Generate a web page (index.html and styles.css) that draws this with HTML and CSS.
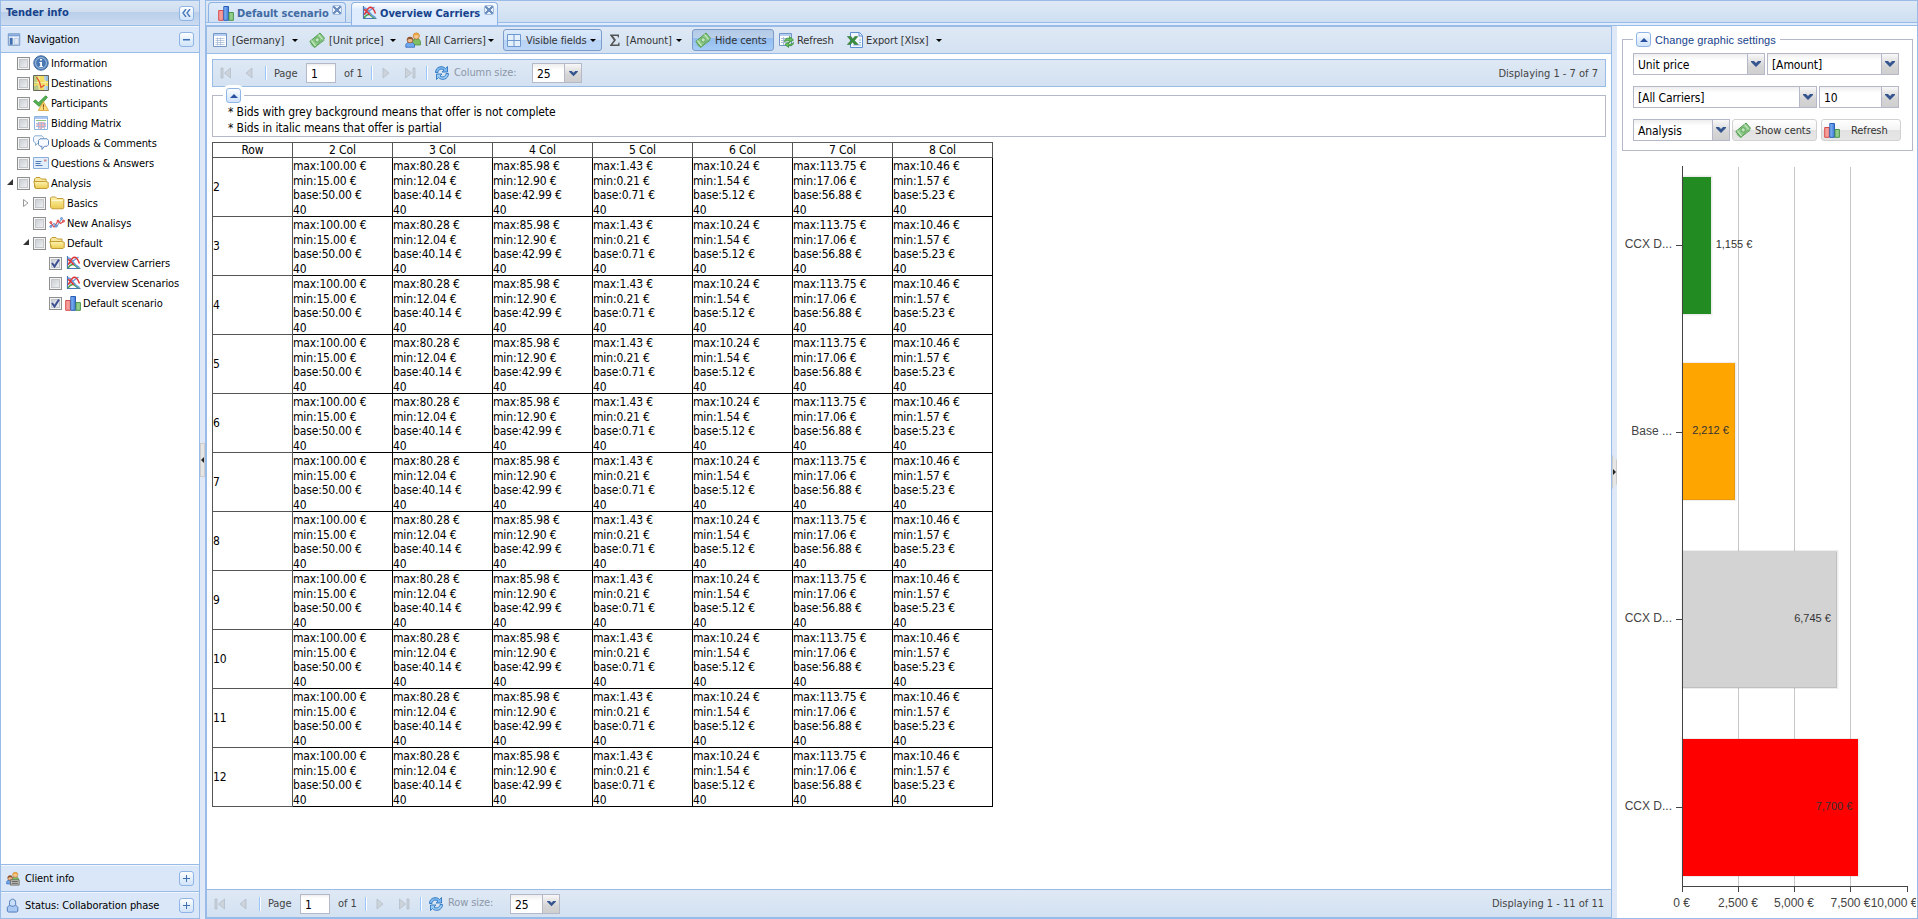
FILE: index.html
```html
<!DOCTYPE html>
<html lang="en">
<head>
<meta charset="utf-8">
<title>Overview Carriers</title>
<link rel="stylesheet" href="styles.css">
</head>
<body>
<svg class="defs" width="0" height="0">
  <defs>
    <linearGradient id="gf" x1="0" y1="0" x2="0" y2="1"><stop offset="0" stop-color="#fdf3b0"/><stop offset="1" stop-color="#eccb50"/></linearGradient>
    <linearGradient id="gbar" x1="0" y1="0" x2="1" y2="0"><stop offset="0" stop-color="#8fc0fa"/><stop offset="1" stop-color="#3a76d6"/></linearGradient>
  </defs>
  <symbol id="i-info" viewBox="0 0 16 16"><circle cx="8" cy="8" r="7.2" fill="#5b87bd" stroke="#3c689f"/><circle cx="8" cy="8" r="5.4" fill="#4a78b2" stroke="#a9c4e2" stroke-width=".9"/><path d="M7 4h2v1.6H7zM6.4 7H9v4h.8v1H6.4v-1h.8V8h-.8z" fill="#fff"/></symbol>
  <symbol id="i-map" viewBox="0 0 16 16"><path d="M.5.5h15v15H.5z" fill="#f2dc62" stroke="#66665a"/><path d="M1 1h3v8H1z" fill="#b9cf7c"/><path d="M11 1h4v5h-2l-2-2z" fill="#8fbce0"/><path d="M1 11l4-1 2 5H1z" fill="#b7c98a"/><path d="M11 11h4v4h-4z" fill="#a8cbe4"/><path d="M12 1v14M1 7.500h14M6 1v14" stroke="#fbf3bd" stroke-width=".7"/><path d="M3.500 2l3 5 1.500 5.500 3.500-2.500" fill="none" stroke="#e2563a" stroke-width="1.300"/></symbol>
  <symbol id="i-part" viewBox="0 0 16 16"><path d="M.5 6.500L2.500 4.800l3 3L12.500.800l2 1.400L6.200 11.500z" fill="#56b04f" stroke="#2f8632" stroke-width=".7"/><path d="M10.300 6.500l5.200 9H5.300z" fill="#fddc7c" stroke="#d69a2c" stroke-width=".8"/><path d="M9.900 9.300h1.100v3.200H9.900zM9.900 13.300h1.100v1.100H9.900z" fill="#8a5510"/></symbol>
  <symbol id="i-matrix" viewBox="0 0 16 16"><path d="M1.500 1.500h13v13h-13z" fill="#fff" stroke="#8db2e0"/><path d="M2 2h12v2H2z" fill="#a9c7ef"/><path d="M3 5.500h10" stroke="#8fc47e"/><path d="M5 7h6v1.500h2v3h-2V13H8.500v1h-2v-1H5v-1.500H3.500v-3H5z" fill="#f7b3b3"/><path d="M3 8.500h10M3 11.500h10M5.500 7v7M8.500 7v7M11.500 7v7" stroke="#9db8e0" stroke-width=".8"/></symbol>
  <symbol id="i-chat" viewBox="0 0 16 16"><path d="M2 .8h7l1.500 1.500v4L9 7.800H5L2.500 10.500V7.800L.5 6.500V2.200z" fill="#f4f8fd" stroke="#8daed4"/><path d="M7 3.800h7L15.500 5.300v4.500L14 11.300h-2.500L9 14.500v-3.200H7L5.500 9.800V5.300z" fill="#f7faff" stroke="#6089bd"/></symbol>
  <symbol id="i-card" viewBox="0 0 16 16"><path d="M.5 2.500h15v11H.5z" fill="#e3eefb" stroke="#8aaedd"/><path d="M2.500 6.500h6M2.500 8.500h5M2.500 10.500h7" stroke="#4f7cb8"/><path d="M11 4.500h2.500v2H11z" fill="#d08a86"/></symbol>
  <symbol id="i-open" viewBox="0 0 16 16"><path d="M1.500 12.500V4L3 2.500h4L8.500 4H13v3" fill="#f8e79a" stroke="#c29c35"/><path d="M.8 6.500h12l2.400.8v5L14 13.500H2.500z" fill="url(#gf)" stroke="#c29c35"/></symbol>
  <symbol id="i-fold" viewBox="0 0 16 16"><path d="M1.500 12V3L2.500 2h4L8 3.500h6l.8 1V13l-.8.800H3z" fill="url(#gf)" stroke="#c29c35"/><path d="M2.500 5.500h11" stroke="#fff8d0"/></symbol>
  <symbol id="i-line" viewBox="0 0 16 16"><path d="M1.500 11.500L5 8.500l3 2.500 5-7.500" fill="none" stroke="#6c9ad6" stroke-width="1.100"/><path d="M1.500 7.500L5 12l4-6 2.500 2.500L15 6" fill="none" stroke="#e04848" stroke-width="1.100"/><g fill="#f08a8a" stroke="#d33" stroke-width=".8"><circle cx="1.800" cy="7.500" r="1"/><circle cx="9" cy="6" r="1"/><circle cx="14.500" cy="6" r="1"/></g><g fill="#9cc0ee" stroke="#4a7fc4" stroke-width=".8"><circle cx="1.800" cy="11.500" r="1"/><circle cx="7" cy="11" r="1.200"/><circle cx="12.500" cy="3.500" r="1"/></g></symbol>
  <symbol id="i-over" viewBox="0 0 16 16"><path d="M2.500 1v12.500H15.500" fill="none" stroke="#4777b8" stroke-width="1.200"/><path d="M3 13c2-3 3.500-4 5.500-3.500S11 13 14.500 13" fill="none" stroke="#4b9f4b" stroke-width="1.500"/><path d="M3 3c3.500 0 4.500 3 6 5s3 4 5.500 4.500M4 9l9.500-7" fill="none" stroke="#6a9cdc" stroke-width="1.300"/><path d="M3 9.500C5 8.500 6 2.500 9.500 2.300c3 0 3.500 3.200 5 6.200M3 4.500c3 1 4 4 6 5" fill="none" stroke="#df3535" stroke-width="1.500"/></symbol>
  <symbol id="i-bars" viewBox="0 0 16 16"><path d="M.7 5.500h4.600v9.800H.7z" fill="#f59d99" stroke="#d94c4c"/><path d="M5.800 1.500h4.700v13.800H5.800z" fill="url(#gbar)" stroke="#2a5db5"/><path d="M11 7.500h4.400v7.800H11z" fill="#92cd8c" stroke="#4c964c"/></symbol>
  <symbol id="i-grid" viewBox="0 0 16 16"><path d="M1.500 1.500h13v13h-13z" fill="#fff" stroke="#7396c6"/><path d="M2 2h12v2H2z" fill="#b4cdf0"/><path d="M3.500 6.500h9M3.500 8.500h9M3.500 10.500h9M3.500 12.500h9M5.500 5.500v8M8.500 5.500v8" stroke="#a8bcd8" stroke-width=".8"/></symbol>
  <symbol id="i-money" viewBox="0 0 16 16"><path d="M.8 9.500L11 1l4.500 5.300L5.800 15.200z" fill="#8ecb88" stroke="#4f9a50"/><path d="M2.500 8.500l4 5.500M9.500 2.500l4.200 5" stroke="#d9f0d4"/><path d="M1.500 12l4 3.500L15.500 8" fill="none" stroke="#69ad68"/><circle cx="8.200" cy="7.900" r="2.200" fill="#c3e6bd" stroke="#5aa35a"/></symbol>
  <symbol id="i-users" viewBox="0 0 16 16"><path d="M7.500 13V9.500L9 7h5l1.500 2.500V13z" fill="#7fbe63" stroke="#4d8a38" stroke-width=".7"/><circle cx="11.300" cy="4" r="3.100" fill="#f8c48d" stroke="#ba7b3b" stroke-width=".8"/><path d="M8.200 4C8 0 14.500 0 14.400 4 12 2.500 10.500 2.500 8.200 4z" fill="#e9a53a"/><path d="M.8 15.300v-2.800L2.500 10.500h5l2 2v2.800z" fill="#6fa8ef" stroke="#2a5db5" stroke-width=".7"/><circle cx="5" cy="8" r="2.900" fill="#f3bb8c" stroke="#93562e" stroke-width=".8"/><path d="M2 8c-.2-4 6.200-4 6 0C6.500 6.500 4 6.500 2 8z" fill="#8c5430"/></symbol>
  <symbol id="i-window" viewBox="0 0 16 16"><path d="M1.500 2.500h13v12h-13z" fill="#e4f0fc" stroke="#6f98ce"/><path d="M8 3v11M2 8.500h12" stroke="#6f98ce"/></symbol>
  <symbol id="i-sigma" viewBox="0 0 16 16"><path d="M3 2.500h9v3h-1L10.500 4H6l3 4-3.500 4.500H11l.5-2h1v3.500H3v-.8L6.800 8.300 3 3.300z" fill="#555"/></symbol>
  <symbol id="i-tabref" viewBox="0 0 16 16"><path d="M1.500 1.500h12v12h-12z" fill="#fff" stroke="#7396c6"/><path d="M2 2h11v2H2z" fill="#b4cdf0"/><path d="M3 6.500h9M3 8.500h9M3 10.500h9M5.500 5v8" stroke="#a8bcd8"/><path d="M6.500 9.500c0-3 3-4 5-3V4.300L15.500 8l-4 2.500V9c-2-.5-3 0-5 .5zM15.500 10.500c0 3-3 3.800-5 3V15.500L6.800 12.300l3.700-2V12c2 .4 3.500 0 5-1.500z" fill="#6abf5c" stroke="#2d8434" stroke-width=".7"/></symbol>
  <symbol id="i-xls" viewBox="0 0 16 16"><path d="M3.500.5h9l3 3v12h-12z" fill="#f2f7fe" stroke="#5c8ed0"/><path d="M12 1v3h3" fill="none" stroke="#5c8ed0"/><path d="M12 8h2M12 10.500h2M6 13h8" stroke="#8db0e0"/><path d="M.3 4.500H4L5.800 7l2-2.500h3L7.500 8.500l3.700 4H7.500l-2-2.500-2 2.500H.3L4 8.500z" fill="#3c8f41" stroke="#236b2b" stroke-width=".5"/></symbol>
  <symbol id="i-nav" viewBox="0 0 16 16"><path d="M1.500 1.500h13v13h-13z" fill="#fff" stroke="#5a83ba"/><path d="M2 2h12v2.500H2z" fill="#7da4da"/><path d="M3 6h3.500v8H3z" fill="#3f6eb0"/><path d="M8 6.500h5.500v7H8z" fill="#dfe9f7" stroke="#a9bfdc"/></symbol>
  <symbol id="i-client" viewBox="0 0 16 16"><use href="#i-users" width="15" height="15"/><path d="M5 9.500h10v6H5z" fill="#c8c8c0" stroke="#66665e"/><path d="M6.500 11.500h7M6.500 13.500h7" stroke="#555"/></symbol>
  <symbol id="i-user" viewBox="0 0 16 16"><path d="M1.500 14.500V10L4 7.500h7L13.500 10v4.500L12 15.500H3z" fill="#a9c9f2" stroke="#4470b4"/><path d="M4 4.500C4 -.5 11 -.5 11 4.500V7c-1 2.500-6 2.500-7 0z" fill="#c8ddf8" stroke="#4470b4"/></symbol>
  <symbol id="i-reload" viewBox="0 0 16 16"><path d="M1.500 7.500c0-6 7-7.500 10-4L13.500 1.500V7H8l2-2C7.500 3 4 4.500 4 7.500z" fill="#7db8ee" stroke="#2f76c0" stroke-width=".9"/><path d="M14.500 8.500c0 6-7 7.500-10 4L2.500 14.500V9H8l-2 2c2.500 2 6 .5 6-2.500z" fill="#9accf5" stroke="#2f76c0" stroke-width=".9"/></symbol>
  <symbol id="i-first" viewBox="0 0 16 16"><path d="M3 3h2v10H3zM12.500 3v10L6.500 8z" fill="#ccd3db" stroke="#b0b9c4" stroke-width=".7"/></symbol>
  <symbol id="i-prev" viewBox="0 0 16 16"><path d="M11 3v10L5 8z" fill="#ccd3db" stroke="#b0b9c4" stroke-width=".7"/></symbol>
  <symbol id="i-down" viewBox="0 0 10 8"><path d="M0 1h3l2 2 2-2h3v1L5 7 0 2z" fill="#35558f"/></symbol>
  <symbol id="i-ddouble" viewBox="0 0 9 8"><path d="M4 0L1 4l3 4M8 0L5 4l3 4" fill="none" stroke="#4878b8" stroke-width="1.400"/></symbol>
</svg>

<div class="viewport">
  <aside class="side">
    <header class="side-title"><span class="bold">Tender info</span><span class="tool"><svg width="9" height="8"><use href="#i-ddouble"/></svg></span></header>
    <header class="acc acc-first"><svg class="ic"><use href="#i-nav"/></svg><span class="grow">Navigation</span><span class="tool minus"></span></header>
    <ul class="tree" id="tree"></ul>
    <header class="acc"><svg class="ic"><use href="#i-client"/></svg><span class="grow">Client info</span><span class="tool minus plus"></span></header>
    <header class="acc acc-last"><svg class="ic"><use href="#i-user"/></svg><span class="grow">Status: Collaboration phase</span><span class="tool minus plus"></span></header>
  </aside>
  <div class="split split-left"><i class="handle"></i></div>
  <main class="main">
    <nav class="tabs">
      <div class="tab tab-a"><svg class="ic"><use href="#i-bars"/></svg><span class="bold">Default scenario</span><i class="close"></i></div>
      <div class="tab tab-b"><svg class="ic"><use href="#i-over"/></svg><span class="bold">Overview Carriers</span><i class="close"></i></div>
    </nav>
    <div class="work">
      <section class="center">
        <div class="toolbar">
          <div class="btn w1"><svg class="ic"><use href="#i-grid"/></svg><span>[Germany]</span><i class="arr"></i></div>
          <div class="btn w2"><svg class="ic"><use href="#i-money"/></svg><span>[Unit price]</span><i class="arr"></i></div>
          <div class="btn w3"><svg class="ic"><use href="#i-users"/></svg><span>[All Carriers]</span><i class="arr"></i></div>
          <div class="btn over w4"><svg class="ic"><use href="#i-window"/></svg><span>Visible fields</span><i class="arr"></i></div>
          <div class="btn w5"><svg class="ic"><use href="#i-sigma"/></svg><span>[Amount]</span><i class="arr"></i></div>
          <div class="btn pressed w6"><svg class="ic"><use href="#i-money"/></svg><span>Hide cents</span></div>
          <div class="btn w7"><svg class="ic"><use href="#i-tabref"/></svg><span>Refresh</span></div>
          <div class="btn w8"><svg class="ic"><use href="#i-xls"/></svg><span>Export [Xlsx]</span><i class="arr"></i></div>
        </div>
        <div class="body">
          <div class="paging boxed">
            <svg class="ic"><use href="#i-first"/></svg><svg class="ic p-prev"><use href="#i-prev"/></svg><i class="sep s1"></i>
            <span class="p-page">Page</span><span class="field p-num">1</span><span class="p-of">of 1</span><i class="sep s2"></i>
            <svg class="ic flip"><use href="#i-prev"/></svg><svg class="ic flip p-last"><use href="#i-first"/></svg><i class="sep s3"></i>
            <svg class="ic p-rel"><use href="#i-reload"/></svg><span class="muted m-col">Column size:</span>
            <span class="combo p-combo"><b>25</b><i><svg width="9" height="7"><use href="#i-down"/></svg></i></span>
            <span class="disp">Displaying 1 - 7 of 7</span>
          </div>
          <div class="note"><span class="tool tri"></span><p>* Bids with grey background means that offer is not complete</p><p>* Bids in italic means that offer is partial</p></div>
          <table class="grid"><thead id="head"></thead><tbody id="rows"></tbody></table>
        </div>
        <div class="paging bottom">
          <svg class="ic"><use href="#i-first"/></svg><svg class="ic p-prev"><use href="#i-prev"/></svg><i class="sep s1"></i>
          <span class="p-page">Page</span><span class="field p-num">1</span><span class="p-of">of 1</span><i class="sep s2"></i>
          <svg class="ic flip"><use href="#i-prev"/></svg><svg class="ic flip p-last"><use href="#i-first"/></svg><i class="sep s3"></i>
          <svg class="ic p-rel"><use href="#i-reload"/></svg><span class="muted m-row">Row size:</span>
          <span class="combo p-combo"><b>25</b><i><svg width="9" height="7"><use href="#i-down"/></svg></i></span>
          <span class="disp">Displaying 1 - 11 of 11</span>
        </div>
      </section>
      <div class="split split-right"><i class="handle handle-r"></i></div>
      <section class="east">
        <div class="settings">
          <div class="legend"><span class="tool tri"></span><span>Change graphic settings</span></div>
          <div class="srow"><span class="combo c132"><b>Unit price</b><i><svg width="10" height="8"><use href="#i-down"/></svg></i></span><span class="combo c132"><b>[Amount]</b><i><svg width="10" height="8"><use href="#i-down"/></svg></i></span></div>
          <div class="srow"><span class="combo c184"><b>[All Carriers]</b><i><svg width="10" height="8"><use href="#i-down"/></svg></i></span><span class="combo c80"><b>10</b><i><svg width="10" height="8"><use href="#i-down"/></svg></i></span></div>
          <div class="srow"><span class="combo c97"><b>Analysis</b><i><svg width="10" height="8"><use href="#i-down"/></svg></i></span><span class="gbtn g85"><svg class="ic"><use href="#i-money"/></svg><span>Show cents</span></span><span class="gbtn g80"><svg class="ic"><use href="#i-bars"/></svg><span>Refresh</span></span></div>
        </div>
        <svg class="chart" width="299" height="767" viewBox="1617 151 299 767">
          <path d="M1738.500 167V886M1794.500 167V886M1850.500 167V886" stroke="#c8c8c8"/>
          <g fill="none" stroke="#000" stroke-opacity=".07" stroke-width="3"><path d="M1683 177h28v137h-28zM1683 363.500h52v136h-52zM1683 551.500h154v136h-154zM1683 739.500h175v136h-175z"/></g>
          <path d="M1683 177h28v137h-28z" fill="#228b22"/>
          <path d="M1683 363h52v137h-52z" fill="#ffa500"/><path d="M1683 499.500h51.500V364" fill="none" stroke="#ea9a0c"/>
          <path d="M1683 551h154v137h-154z" fill="#d3d3d3"/><path d="M1683 687.500h153.500V552" fill="none" stroke="#c0c0c0"/>
          <path d="M1683 739h175v137h-175z" fill="#f00"/>
          <path d="M1682.500 166V892M1676 245.500h6M1676 432.500h6M1676 619.500h6M1676 807.500h6M1682 886.500h226M1738.500 887v5M1794.500 887v5M1850.500 887v5M1907.500 887v5" fill="none" stroke="#444"/>
          <g class="cat"><text x="1672" y="248">CCX D...</text><text x="1672" y="435">Base ...</text><text x="1672" y="622">CCX D...</text><text x="1672" y="810">CCX D...</text></g>
          <g class="val"><text x="1734" y="248">1,155 €</text><text x="1710.500" y="434">2,212 €</text><text x="1812.500" y="622">6,745 €</text><text x="1834" y="810">7,700 €</text></g>
          <g class="axis"><text x="1681.500" y="907">0 €</text><text x="1738" y="907">2,500 €</text><text x="1794" y="907">5,000 €</text><text x="1850.500" y="907">7,500 €</text><text x="1894" y="907">10,000 €</text></g>
        </svg>
      </section>
    </div>
  </main>
</div>
<script src="app.js"></script>
</body>
</html>
```

FILE: styles.css
```css
* { box-sizing: border-box; }
html, body { height: 919px; overflow: hidden; }
body { margin: 0; background: #fff; font: 11px/14px "DejaVu Sans Condensed", "DejaVu Sans", sans-serif; font-stretch: condensed; letter-spacing: -0.1px; color: #000; }
ul, p { margin: 0; padding: 0; list-style: none; }
.defs { position: absolute; }
.ic { width: 16px; height: 16px; flex: none; display: block; }
.grow { flex: 1; padding-top: 1px; }
.bold { font-weight: bold; letter-spacing: 0; }
.viewport { display: flex; width: 1918px; height: 919px; background: #dfe8f6; overflow: hidden; }

.side { width: 200px; height: 919px; display: flex; flex-direction: column; border: 1px solid #99bbe8; background: #fff; }
.side-title { height: 25px; display: flex; align-items: center; justify-content: space-between; padding: 0 5px; color: #15428b; border-bottom: 1px solid #99bbe8; background: linear-gradient(#dae6f4 0, #cfddef 11px, #b9cee9 11px, #cbdbf0 100%); }
.acc { height: 27px; flex: none; display: flex; align-items: center; gap: 3px; padding: 0 5px 0 4px; background: #d9e7f8; border-top: 1px solid #99bbe8; box-shadow: inset 0 1px #f1f6fd; }
.acc .ic { margin: 1px 2px 0 1px; width: 14px; height: 15px; }
.acc-first { border-top: 0; border-bottom: 1px solid #99bbe8; gap: 4px; }
.acc-first .ic { margin-left: 2px; }
.tool { width: 15px; height: 15px; flex: none; border: 1px solid #8fb4e6; border-radius: 3px; background: linear-gradient(#fff, #e3effc 50%, #d2e4fa); display: flex; align-items: center; justify-content: center; position: relative; }
.minus::before { content: ""; width: 7px; height: 1px; background: #3f6fb0; box-shadow: 0 1px #8db0de; }
.plus::before { box-shadow: none; }
.plus::after { content: ""; position: absolute; left: 6px; top: 3px; width: 1px; height: 7px; background: #3f6fb0; }
.tri::before { content: ""; border: 4px solid transparent; border-top: 0; border-bottom-color: #2a52a0; }

.tree { flex: 1; }
.node { height: 20px; display: flex; align-items: center; padding-left: 6px; }
.node.d1 { padding-left: 22px; }
.node.d2 { padding-left: 38px; }
.node .ic { margin: 0 2px 0 3px; }
.label { padding-top: 1px; }
.exp { width: 10px; height: 8px; flex: none; }
.exp.open::before { content: ""; display: block; width: 0; height: 0; border-left: 6px solid transparent; border-bottom: 6px solid #333; }
.chk { width: 13px; height: 13px; flex: none; border: 1px solid #8e8f8f; background: linear-gradient(135deg, #c3c8ce, #f6f6f6); box-shadow: inset 0 0 0 1px #f4f4f4, inset 0 0 0 2px #c4c8cd; }
.chk svg, .exp svg { display: block; }

.split { width: 5px; position: relative; background: #dfe8f6; flex: none; }
.handle { position: absolute; left: 0; top: 443px; width: 5px; height: 34px; background: #e6e6e6; border: 1px solid #ccc; }
.handle::before { content: ""; position: absolute; left: 0; top: 13px; border: 3px solid transparent; border-left: 0; border-right-color: #222; }
.handle-r { top: 429px; clip-path: polygon(0 0, 100% 5px, 100% 29px, 0 100%); }
.handle-r::before { border-left: 3px solid #222; border-right: 0; }

.main { width: 1713px; height: 919px; border: 1px solid #99bbe8; display: flex; flex-direction: column; background: #dfe8f6; }
.tabs { height: 25px; flex: none; display: flex; align-items: flex-start; gap: 5px; padding: 1px 0 0 2px; background: linear-gradient(#dfe9f5 0, #cddff1 21px, #99bbe8 21px, #99bbe8 22px, #deecfd 22px, #deecfd 24px, #99bbe8 24px); }
.tab { height: 20px; display: flex; align-items: center; border: 1px solid #8db2e3; border-bottom: 0; border-radius: 4px 4px 0 0; padding: 1px 0 0 9px; color: #416aa3; background: linear-gradient(#deebfb, #cfe0f5); position: relative; }
.tab-a { width: 138px; }
.tab-b { width: 147px; height: 23px; padding-bottom: 3px; color: #15428b; background: linear-gradient(#fff, #deecfd 30%); }
.tab .ic { margin-right: 3px; }
.tab .bold { padding-top: 1px; }
.close { position: absolute; right: 3px; top: 2px; width: 10px; height: 10px; border: 1px solid #a5bddf; border-radius: 2px; background: linear-gradient(45deg, transparent 42%, #6d8fc0 42%, #6d8fc0 58%, transparent 58%), linear-gradient(-45deg, #e6effa 42%, #6d8fc0 42%, #6d8fc0 58%, #e6effa 58%); }
.work { flex: 1; display: flex; min-height: 0; }
.center { width: 1406px; flex: none; border: 1px solid #99bbe8; display: flex; flex-direction: column; background: #fff; }

.toolbar { height: 27px; flex: none; display: flex; align-items: center; padding-left: 3px; border-bottom: 1px solid #99bbe8; background: linear-gradient(#dfe9f5, #d3e1f1); color: #333; }
.btn { height: 22px; display: flex; align-items: center; border: 1px solid transparent; border-radius: 3px; padding-left: 2px; position: relative; white-space: nowrap; }
.btn span { margin-left: 4px; padding-top: 1px; }
.arr { position: absolute; right: 5px; top: 9px; border: 3px solid transparent; border-top-color: #000; border-bottom: 0; }
.over { border-color: #7c9ccb; background: linear-gradient(#dcebfc 0, #cfe1f9 50%, #b9d3f4 50%, #bcd6f7 100%); }
.pressed { border-color: #7c9ccb; background: linear-gradient(#b3cae6 0, #bbd0ea 42%, #94bdef 42%, #a5ccf7 100%); }
.w1 { width: 95px; margin-left: -1px; }
.w2 { width: 96px; margin-left: 2px; }
.w3 { width: 98px; }
.w4 { width: 99px; margin-left: 3px; }
.w5 { width: 84px; margin-left: 2px; }
.w6 { width: 82px; margin-left: 4px; }
.w7 { width: 65px; margin-left: 1px; }
.w8 { width: 104px; margin-left: 4px; }
.w7 span, .w8 span, .w5 span { margin-left: 3px; }

.body { flex: 1; padding: 5px; min-height: 0; }
.paging { height: 28px; display: flex; align-items: center; padding: 0 7px 0 5px; background: linear-gradient(#dfe9f5, #d3e1f1); color: #444; white-space: nowrap; }
.boxed { border: 1px solid #99bbe8; }
.bottom { border-top: 1px solid #99bbe8; flex: none; }
.p-prev { margin-left: 7px; }
.sep { width: 2px; height: 14px; flex: none; background: #98c8ff; border-right: 1px solid #fff; }
.s1 { margin-left: 8px; }
.p-page { width: 32px; margin-left: 7px; padding-top: 1px; }
.field { border: 1px solid #b5b8c8; background: linear-gradient(#eee 0, #fff 3px); height: 20px; font-size: 12px; line-height: 20px; padding-left: 4px; color: #000; }
.p-num { width: 30px; margin-right: 8px; }
.p-of { width: 27px; padding-top: 1px; }
.flip { transform: scaleX(-1); margin-left: 5px; }
.p-last { margin-left: 8px; }
.s3 { margin-left: 8px; }
.p-rel { margin: 0 4px 0 6px; }
.muted { color: #8c97a8; width: 78px; margin-top: -1px; }
.m-row { width: 62px; }
.disp { margin-left: auto; padding-top: 1px; letter-spacing: 0; }
.combo { display: flex; height: 22px; border: 1px solid #b5b8c8; background: linear-gradient(#eee 0, #fff 6px); color: #000; font-size: 12px; }
.combo b { flex: 1; font-weight: normal; padding-left: 4px; line-height: 22px; }
.combo i { width: 17px; border-left: 1px solid #b5b8c8; background: linear-gradient(#f8f8f8, #d5d5d5 60%, #cfcfcf); display: flex; align-items: center; justify-content: center; }
.p-combo { width: 50px; height: 20px; }
.p-combo b { line-height: 20px; }
.note { position: relative; height: 42px; margin-top: 8px; border: 1px solid #b5b8c8; padding: 8px 0 0 15px; font-size: 12px; line-height: 16px; }
.note .tool { position: absolute; left: 13px; top: -8px; box-shadow: 0 0 0 3px #fff; }

.grid { border-collapse: collapse; table-layout: fixed; width: 781px; margin-top: 5px; font-size: 12px; line-height: 14.5px; }
.grid th { height: 15px; padding: 0; font-weight: normal; border: 1px solid #555; line-height: 14px; }
.grid td { height: 59px; padding: 0; border: 1px solid #000; vertical-align: middle; }
.grid td.rn { border-color: #555; }
.grid th:first-child { width: 80px; }
.cell { padding-top: 1px; margin-bottom: -1px; letter-spacing: -0.15px; }

.east { flex: 1; background: #fff; display: flex; flex-direction: column; }
.settings { position: relative; margin: 13px 4px 0 5px; height: 112px; flex: none; border: 1px solid #b5b8c8; padding: 13px 0 0 10px; display: flex; flex-direction: column; gap: 11px; }
.legend { position: absolute; left: 10px; top: -8px; height: 15px; display: flex; align-items: center; gap: 4px; padding: 0 4px 0 3px; background: #fff; font: 11px/14px "Liberation Sans", sans-serif; letter-spacing: 0.1px; color: #15428b; }
.srow { display: flex; gap: 2px; }
.c132 { width: 132px; }
.c184 { width: 184px; }
.c80 { width: 80px; }
.c97 { width: 97px; }
.gbtn { height: 22px; display: flex; align-items: center; border: 1px solid #d1d1d1; border-radius: 3px; background: linear-gradient(#fff, #f4f4f4 48%, #e2e2e2 52%, #e6e6e6); color: #333; padding-left: 2px; }
.gbtn span { padding-top: 1px; }
.g85 { width: 85px; }
.g85 span { margin-left: 4px; }
.g80 { width: 80px; margin-left: 2px; }
.g80 span { margin-left: 11px; }
.chart { display: block; font-family: "Liberation Sans", sans-serif; letter-spacing: 0; }
.cat { font-size: 12px; fill: #444; text-anchor: end; }
.axis { font-size: 12px; fill: #444; text-anchor: middle; }
.val { font-size: 11px; fill: #333; text-anchor: middle; }
```

FILE: app.js
```js
const nodes = [
  [0, '', 0, 'info', 'Information'], [0, '', 0, 'map', 'Destinations'], [0, '', 0, 'part', 'Participants'],
  [0, '', 0, 'matrix', 'Bidding Matrix'], [0, '', 0, 'chat', 'Uploads & Comments'], [0, '', 0, 'card', 'Questions & Answers'],
  [0, 'open', 0, 'open', 'Analysis'], [1, 'shut', 0, 'fold', 'Basics'], [1, '', 0, 'line', 'New Analisys'],
  [1, 'open', 0, 'open', 'Default'], [2, '', 1, 'over', 'Overview Carriers'], [2, '', 0, 'over', 'Overview Scenarios'],
  [2, '', 1, 'bars', 'Default scenario']
];
const shut = '<svg width="6" height="8"><path d="M.5.5v7L5 4z" fill="#fff" stroke="#999"/></svg>';
const tick = '<svg width="11" height="11"><path d="M2 5l2.500 3.500L9 1.500" fill="none" stroke="#3a4f94" stroke-width="2"/></svg>';
document.getElementById('tree').innerHTML = nodes.map(([d, e, c, icon, text]) =>
  `<li class="node d${d}"><span class="exp ${e}">${e === 'shut' ? shut : ''}</span><span class="chk">${c ? tick : ''}</span>` +
  `<svg class="ic"><use href="#i-${icon}"/></svg><span class="label">${text.replace('&', '&amp;')}</span></li>`).join('');

const cols = [
  ['100.00', '15.00', '50.00'], ['80.28', '12.04', '40.14'], ['85.98', '12.90', '42.99'], ['1.43', '0.21', '0.71'],
  ['10.24', '1.54', '5.12'], ['113.75', '17.06', '56.88'], ['10.46', '1.57', '5.23']
];
document.getElementById('head').innerHTML = '<tr><th>Row</th>' + cols.map((_, i) => `<th>${i + 2} Col</th>`).join('') + '</tr>';
const cells = cols.map(([max, min, base]) => `<td><div class="cell">max:${max} €<br>min:${min} €<br>base:${base} €<br>40</div></td>`).join('');
let rows = '';
for (let r = 2; r <= 12; r++) rows += `<tr><td class="rn">${r}</td>${cells}</tr>`;
document.getElementById('rows').innerHTML = rows;
```
